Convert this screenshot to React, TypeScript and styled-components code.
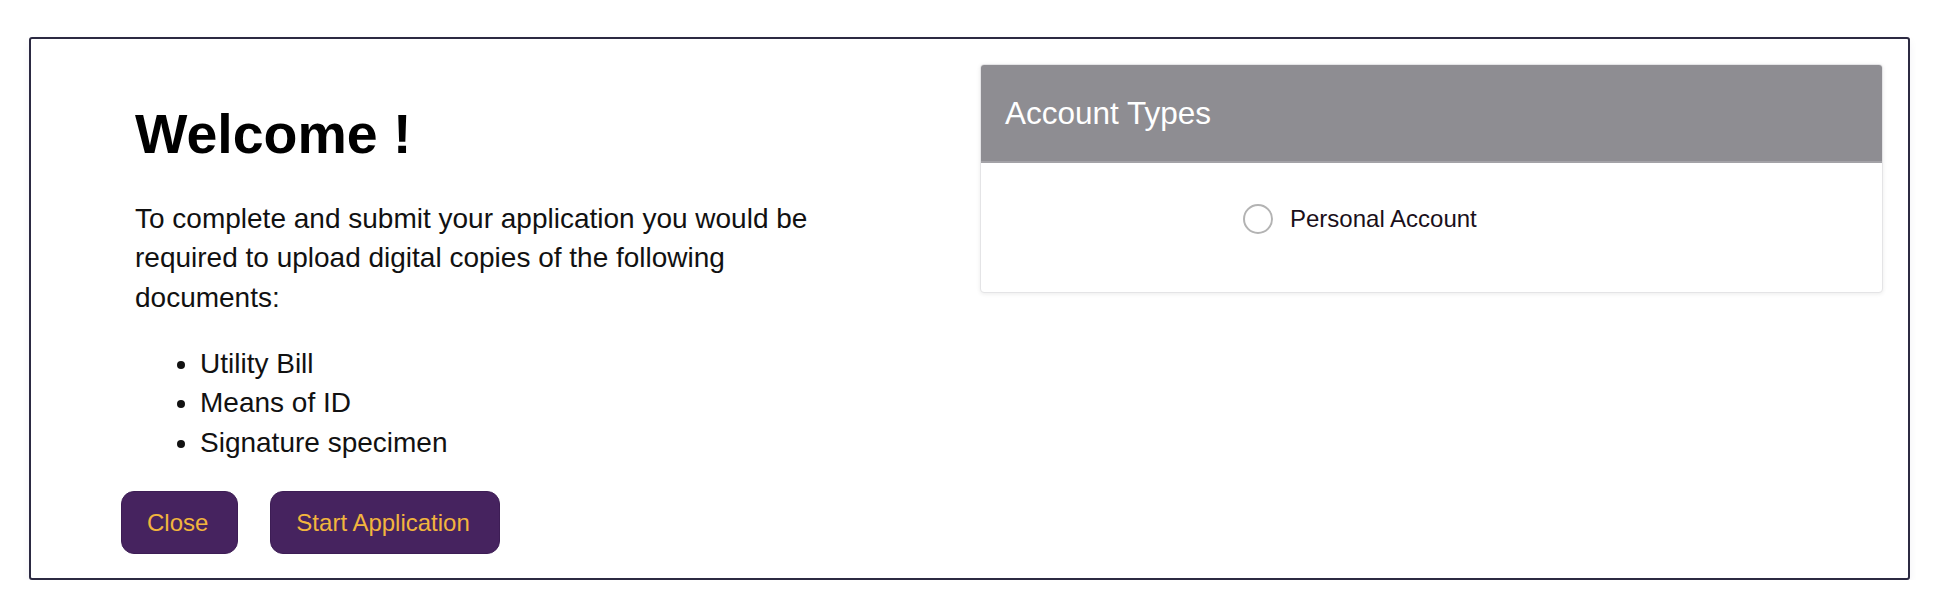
import React from "react";
import styled, { createGlobalStyle } from "styled-components";

const GlobalStyle = createGlobalStyle`
  html, body {
    margin: 0;
    padding: 0;
    background: #ffffff;
  }
  body {
    font-family: "Liberation Sans", Arial, Helvetica, sans-serif;
    color: #000;
  }
`;

const Page = styled.div`
  padding: 37px 26px 0 29px;
`;

const Card = styled.div`
  display: flex;
  gap: 10px;
  border: 2px solid #2c2a42;
  border-radius: 3px;
  padding: 25px 25px 24px 25px;
  box-shadow: 0 4px 8px rgba(40, 40, 80, 0.06);
  background: #fff;
`;

const LeftColumn = styled.div`
  flex: 0 0 914px;
  display: flex;
  flex-direction: column;
`;

const TextBlock = styled.div`
  padding-left: 79px;
`;

const Heading = styled.h1`
  margin: 37px 0 31.5px 0;
  font-size: 55.5px;
  line-height: 66px;
  font-weight: 700;
  color: #000;
`;

const Paragraph = styled.p`
  margin: 0;
  font-size: 28px;
  line-height: 39.5px;
  color: #111;
  max-width: 700px;
`;

const DocList = styled.ul`
  margin: 26.5px 0 0 0;
  padding-left: 65px;
  font-size: 28px;
  line-height: 39.5px;
  color: #111;
`;

const ButtonRow = styled.div`
  display: flex;
  gap: 32px;
  margin-top: 29px;
  padding-left: 65px;
`;

const ActionButton = styled.button`
  height: 63px;
  padding: 0 29px 0 25px;
  border: 1px solid #3d1d55;
  border-radius: 13px;
  background: #46235f;
  color: #f2b53d;
  font-family: "Liberation Sans", Arial, Helvetica, sans-serif;
  font-size: 24px;
  cursor: pointer;
`;

const Panel = styled.div`
  flex: 1;
  align-self: flex-start;
  border: 1px solid #e4e4e6;
  border-radius: 4px;
  box-shadow: 0 1px 4px rgba(0, 0, 0, 0.08);
  overflow: hidden;
  background: #fff;
`;

const PanelHeader = styled.div`
  height: 96px;
  display: flex;
  align-items: center;
  padding-left: 24px;
  background: #8e8d92;
  border-bottom: 2px solid #a3a2a7;
  color: #fff;
  font-size: 31.5px;
`;

const PanelBody = styled.div`
  padding: 41px 0 54px 262px;
`;

const RadioLabel = styled.label`
  display: inline-flex;
  align-items: center;
  gap: 17px;
  font-size: 24px;
  color: #1a0f1a;
  cursor: pointer;
`;

const RadioCircle = styled.span`
  display: inline-block;
  width: 30px;
  height: 30px;
  box-sizing: border-box;
  border: 2px solid #b3b3b3;
  border-radius: 50%;
  background: #fff;
`;

export default function App() {
  return (
    <>
      <GlobalStyle />
      <Page>
        <Card>
          <LeftColumn>
            <TextBlock>
              <Heading>Welcome !</Heading>
              <Paragraph>
                To complete and submit your application you would be required to
                upload digital copies of the following documents:
              </Paragraph>
              <DocList>
                <li>Utility Bill</li>
                <li>Means of ID</li>
                <li>Signature specimen</li>
              </DocList>
            </TextBlock>
            <ButtonRow>
              <ActionButton>Close</ActionButton>
              <ActionButton>Start Application</ActionButton>
            </ButtonRow>
          </LeftColumn>
          <Panel>
            <PanelHeader>Account Types</PanelHeader>
            <PanelBody>
              <RadioLabel>
                <RadioCircle />
                Personal Account
              </RadioLabel>
            </PanelBody>
          </Panel>
        </Card>
      </Page>
    </>
  );
}
